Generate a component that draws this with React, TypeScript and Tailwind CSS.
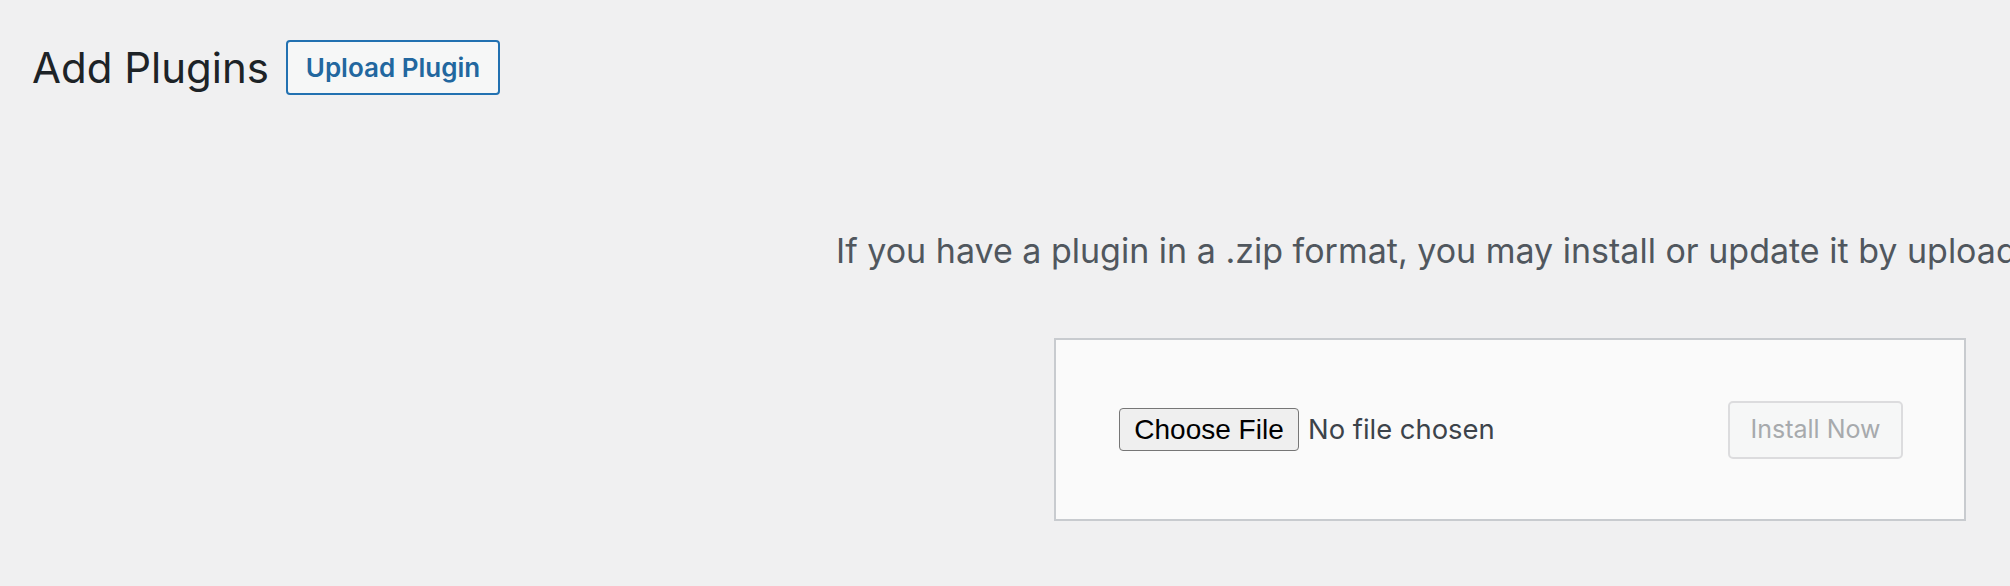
export default function App() {
  return (
    <div className="w-[2010px] h-[586px] overflow-hidden bg-[#f0f0f1] font-['Inter',sans-serif]">
      {/* Header: title + action button */}
      <div className="flex items-center pl-[32px] pt-[40px] gap-[17px]">
        <h1 className="text-[42px] leading-[55px] font-normal text-[#1d2327]">Add Plugins</h1>
        <button className="h-[55px] w-[214px] rounded-[4px] border-2 border-[#2271b1] bg-[#f6f7f7] text-[26px] font-semibold text-[#22679f]">
          Upload Plugin
        </button>
      </div>

      {/* Help text */}
      <p className="mt-[136px] pl-[836px] whitespace-nowrap text-[34px] leading-[40px] text-[#50575e]">
        If you have a plugin in a .zip format, you may install or update it by uploading it here.
      </p>

      {/* Upload form */}
      <div className="mt-[67px] ml-[1054px] w-[912px] h-[183px] border-2 border-[#c8cbcf] bg-[#fafafa] flex items-center justify-between pl-[63px] pr-[61px]">
        <div className="flex items-center gap-[9px]">
          <span className="h-[43px] w-[180px] flex items-center justify-center rounded-[4px] border-[1.5px] border-[#767676] bg-[#efefef] font-['Liberation_Sans',sans-serif] text-[28px] text-black">
            Choose File
          </span>
          <span className="text-[27.4px] text-[#3c434a]">No file chosen</span>
        </div>
        <button className="h-[58px] w-[175px] rounded-[5px] border-2 border-[#dcdcde] bg-[#f6f7f7] text-[25px] text-[#a7aaad]">
          Install Now
        </button>
      </div>
    </div>
  );
}
